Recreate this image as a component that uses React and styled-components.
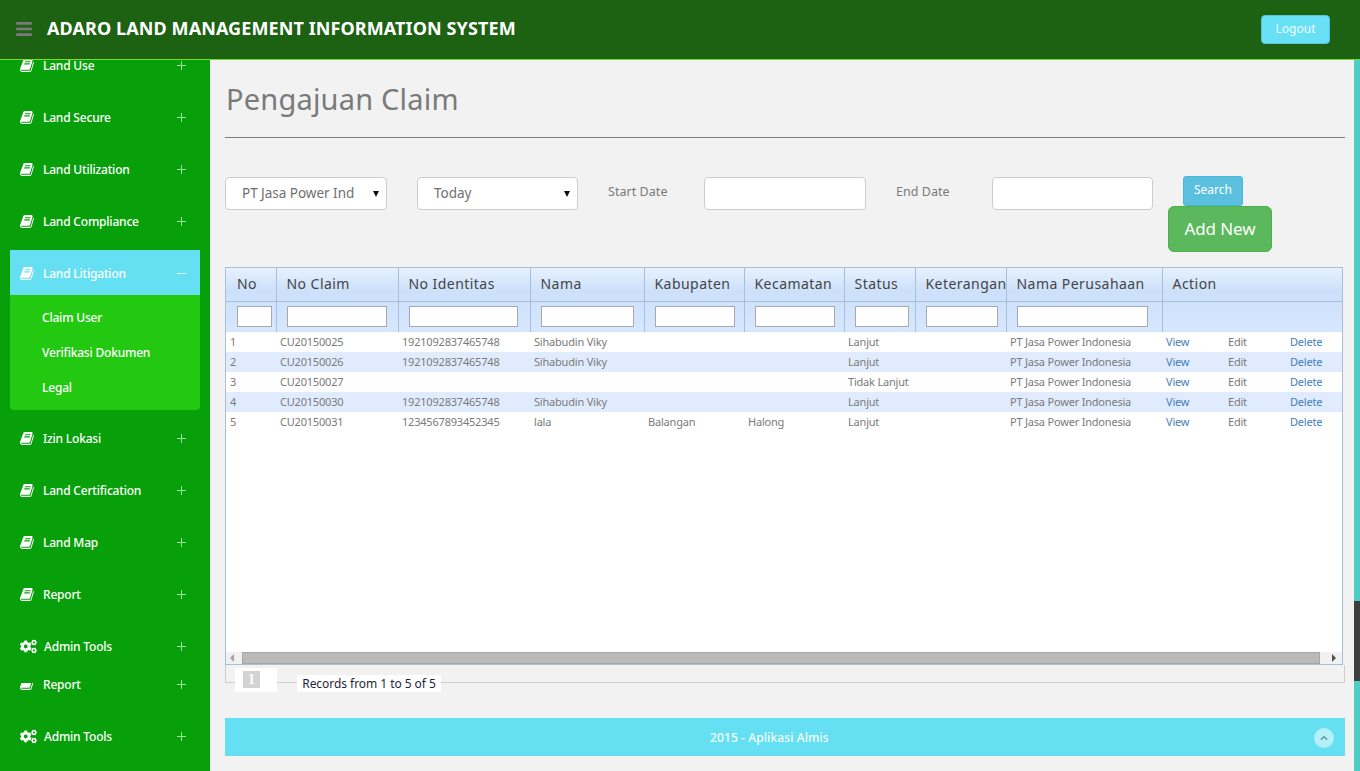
import React from "react";
import styled, { createGlobalStyle } from "styled-components";
import { FaCogs, FaBars, FaChevronUp } from "react-icons/fa";

const Global = createGlobalStyle`
  html, body { margin: 0; padding: 0; height: 100%; overflow: hidden; background: #f2f2f2; }
  body { font-family: "Noto Sans", "Open Sans", sans-serif; }
  * { box-sizing: border-box; }
`;

const Page = styled.div`
  width: 1360px; height: 771px; overflow: hidden; display: flex; flex-direction: column;
`;
const Header = styled.header`
  height: 60px; flex: none; background: #1c6212; border-bottom: 1px solid #76dc2c;
  display: flex; align-items: center; padding: 0 30px 2px 15px; position: relative; z-index: 2;
`;
const Burger = styled.span`
  color: #7b7b7b; display: flex; font-size: 18px; margin-right: 14px; margin-top: 1px;
`;
const Brand = styled.h1`
  margin: 0 0 1px; flex: 1; font-size: 18px; font-weight: 700; color: #fff; letter-spacing: 0.1px; white-space: nowrap;
`;
const Logout = styled.button`
  width: 69px; height: 29px; margin-top: 2px; background: #68e0f5; border: 1px solid #56c6d8; border-radius: 4px;
  color: #eefcff; font: 12px "Noto Sans", sans-serif; padding: 0 0 2px;
`;
const Body = styled.div`flex: 1; display: flex; min-height: 0;`;
const Sidebar = styled.nav`
  width: 210px; flex: none; background: #08a00a; overflow: hidden; padding: 0 10px;
`;
const Menu = styled.div`display: flex; flex-direction: column; margin-top: -18px;`;
const Row = styled.div`
  height: 45px; margin-bottom: ${p => p.$mb ?? 7}px; display: flex; align-items: center; padding: 2px 12px 0 10px;
  background: ${p => p.$active ? "#65dff2" : "transparent"}; color: #fff; font-size: 12px; font-weight: 500;
`;
const RowIcon = styled.span`
  width: ${p => p.$wide ? 24 : 23}px; flex: none; display: flex; align-items: center; font-size: 17px; color: #fff;
`;
const ClipIcon = styled.span`
  width: 23px; flex: none; height: 8px; margin-top: 5px; overflow: hidden; display: flex; align-items: flex-end; color: #fff;
`;
const RowLabel = styled.span`flex: 1; white-space: nowrap; letter-spacing: -0.2px;`;
const BookSvg = styled.svg`width: 15px; height: 15px; fill: currentColor; flex: none;`;
const Sign = styled.svg`
  width: 9px; height: 9px; stroke: ${p => p.$light ? "#e8fbfe" : "#9be39c"}; stroke-width: 1; flex: none; margin-right: 2px;
`;
const Sub = styled.div`
  height: 115px; margin-bottom: 5px; background: #22c910; border-radius: 0 0 4px 4px; padding-top: 5px;
`;
const SubItem = styled.div`
  height: 35px; display: flex; align-items: center; padding-left: 32px; color: #fff; font-size: 12px; font-weight: 500; letter-spacing: -0.2px;
`;
const Main = styled.main`flex: 1; min-width: 0; padding: 19px 9px 0 15px; background: #f2f2f2;`;
const Title = styled.h2`
  margin: 0 0 0 1px; font-size: 29px; line-height: 40px; font-weight: 400; color: #7a7a7a; letter-spacing: 0.2px;
`;
const Rule = styled.hr`margin: 18px 0 39px; border: 0; border-top: 1px solid #7d7d7d;`;
const Filters = styled.div`display: flex; align-items: flex-start; height: 90px;`;
const Select = styled.select`
  appearance: none; width: ${p => p.$w}px; height: 33px; flex: none; margin-right: 30px; padding: 0 0 2px 16px;
  background: #fff url("data:image/svg+xml,%3Csvg xmlns='http://www.w3.org/2000/svg' width='6' height='6'%3E%3Cpath d='M0 0h6L3 6z' fill='%23111'/%3E%3C/svg%3E") no-repeat right 7px center;
  border: 1px solid #ccc; border-radius: 4px; color: #6f6f6f; font: 13.5px "Noto Sans", sans-serif; letter-spacing: -0.02px;
`;
const FieldLabel = styled.label`
  width: ${p => p.$w}px; flex: none; height: 29px; line-height: 29px; color: #7a7a7a; font-size: 12.5px; letter-spacing: 0.05px;
`;
const DateInput = styled.input`
  width: ${p => p.$w}px; height: 33px; flex: none; margin-right: ${p => p.$mr}px; background: #fff; border: 1px solid #ccc; border-radius: 4px;
`;
const Buttons = styled.div`
  display: flex; flex-direction: column; align-items: flex-start; width: 104px; margin-top: -1px;
`;
const Search = styled.button`
  margin-left: 15px; width: 60px; height: 30px; background: #5bc0de; border: 1px solid #46b8da; border-radius: 3px;
  color: #fff; font: 12px "Noto Sans", sans-serif; padding: 0 0 3px;
`;
const AddNew = styled.button`
  width: 104px; height: 46px; background: #5cb85c; border: 1px solid #4cae4c; border-radius: 6px;
  color: #fff; font: 17px "Noto Sans", sans-serif; padding: 0 0 2px; letter-spacing: -0.1px;
`;
const Grid = styled.div`
  height: 398px; border: 1px solid #a6c0d9; background: #fff; display: flex; flex-direction: column; width: 1118px;
`;
const GridTable = styled.table`
  flex: none; table-layout: fixed; border-collapse: collapse; width: 1116px;
`;
const Col = styled.col`width: ${p => p.$w}px;`;
const HeadCell = styled.th`
  height: 33px; padding: 0 0 2px 10px; border-right: 1px solid #a6c0d9; border-bottom: 1px solid #a6c0d9;
  background: linear-gradient(#e6f1fe, #cce0fb 70%, #cfe2fc); color: #444; font-size: 14px; font-weight: 400; text-align: left;
  white-space: nowrap; overflow: hidden; letter-spacing: 0.45px;
  &:first-child { padding-left: 11px; }
  &:last-child { border-right: 0; }
`;
const FilterCell = styled.th`
  height: 31px; padding: 0 0 0 10px; border-right: 1px solid #a6c0d9; background: linear-gradient(#cfe2fc, #d6e7fe);
  &:first-child { padding-left: 11px; }
  &:last-child { border-right: 0; }
`;
const FilterInput = styled.input`
  display: block; width: ${p => p.$w}px; height: 21px; padding: 0; background: #fff; border: 1px solid #a9a9a9;
`;
const DataRow = styled.tr`background: ${p => p.$alt ? "#e0ecfd" : "#fff"};`;
const Cell = styled.td`
  height: 20px; padding: 0 0 2px 4px; font-size: 11px; color: ${p => p.$link ? "#4680ba" : "#7a7a7a"}; white-space: nowrap; overflow: hidden; letter-spacing: -0.2px;
`;
const GridSpace = styled.div`flex: 1;`;
const HScroll = styled.div`
  height: 12px; flex: none; background: #f1f1f1; display: flex; align-items: center; padding: 0 6px 0 4px;
`;
const ScrollThumb = styled.div`flex: 1; height: 12px; background: #bababa; border: 1px solid #a6a6a6; margin: 0 12px 0 8px;`;
const Arrow = styled.span`
  width: 0; height: 0; border-top: 4px solid transparent; border-bottom: 4px solid transparent;
  ${p => p.$right ? "border-left: 4px solid #505050;" : "border-right: 4px solid #a3a3a3;"}
`;
const Pager = styled.div`
  height: 18px; border: 1px solid #d2cdc5; border-top: 0; display: flex; align-items: flex-start; padding-left: 9px;
`;
const PageBox = styled.div`
  width: 42px; height: 24px; background: #fff; padding: 3px 0 0 8px; margin-top: 3px; flex: none;
`;
const PageNum = styled.span`
  display: block; width: 17px; height: 17px; background: #d3d3d3; color: #fff; font: 700 14px/17px "Liberation Serif", serif; text-align: center;
`;
const Records = styled.div`
  margin: 10px 0 0 20px; height: 17px; width: 144px; background: #fff; color: #1f1f3a; font-size: 12px; line-height: 17px; text-align: center; white-space: nowrap; letter-spacing: -0.05px;
`;
const Footer = styled.footer`
  margin-top: 35px; height: 38px; background: #65dff2; display: flex; align-items: center; padding: 0 11px 0 485px; color: #f4ffff; font-size: 12px; font-weight: 500; letter-spacing: 0.1px;
`;
const FooterText = styled.span`flex: 1;`;
const UpButton = styled.span`
  width: 20px; height: 20px; margin-top: 2px; border-radius: 50%; background: #b3f0f9; display: flex; align-items: center; justify-content: center; color: #5d8a8f; font-size: 8px;
`;
const Rail = styled.div`width: 6px; flex: none; display: flex; flex-direction: column;`;
const RailPart = styled.div`
  flex: ${p => p.$h ? `none` : 1}; height: ${p => p.$h ? `${p.$h}px` : "auto"}; background: ${p => p.$dark ? "#3e3e3e" : "#4ecdc4"};
`;

const PlusSign = () => <Sign viewBox="0 0 9 9"><path d="M0 4.5h9M4.5 0v9" /></Sign>;
const MinusSign = () => <Sign $light viewBox="0 0 9 9"><path d="M0 4.5h9" /></Sign>;
const Book = () => (
  <BookSvg viewBox="0 0 1792 1792">
    <path d="M1639 478q40 57 18 129l-275 906q-19 64-76.500 107.500t-122.500 43.500h-923q-77 0-148.500-53.500t-99.500-131.500q-24-67-2-127 0-4 3-27t4-37q1-8-3-21.500t-3-19.500q2-11 8-21t16.500-23.500 16.500-23.500q23-38 45-91.500t30-91.500q3-10 .5-30t-.5-28q3-11 17-28t17-23q21-36 42-92t25-90q1-9-2.500-32t.5-28q4-13 22-30.500t22-22.500q19-26 42.500-84.500t27.500-96.500q1-8-3-25.500t-2-26.500q2-8 9-18t18-23 17-21q8-12 16.500-30.500t15-35 16-36 19.500-32 26.500-23.500 36-11.500 47.500 5.500l-1 3q38-9 51-9h761q74 0 114 56t18 130l-274 906q-36 119-71.500 153.500t-128.500 34.500h-869q-27 0-38 15-11 16-1 43 24 70 144 70h923q29 0 56-15.500t35-41.500l300-987q7-22 5-57 38 15 59 43zm-1064 2q-4 13 2 22.500t20 9.500h608q13 0 25.500-9.500t16.500-22.500l21-64q4-13-2-22.500t-20-9.500h-608q-13 0-25.500 9.500t-16.500 22.500zm-83 256q-4 13 2 22.500t20 9.500h608q13 0 25.500-9.500t16.500-22.500l21-64q4-13-2-22.500t-20-9.500h-608q-13 0-25.500 9.500t-16.500 22.500z" />
  </BookSvg>
);

const Item = ({ label, icon = "book", active, mb }) => (
  <Row $active={active} $mb={mb}>
    {icon === "book" && <RowIcon><Book /></RowIcon>}
    {icon === "cogs" && <RowIcon $wide><FaCogs /></RowIcon>}
    {icon === "clip" && <ClipIcon><Book /></ClipIcon>}
    <RowLabel>{label}</RowLabel>
    {active ? <MinusSign /> : <PlusSign />}
  </Row>
);

const heads = ["No", "No Claim", "No Identitas", "Nama", "Kabupaten", "Kecamatan", "Status", "Keterangan", "Nama Perusahaan"];
const filterW = [35, 100, 109, 93, 80, 80, 54, 72, 131];
const rows = [
  ["1", "CU20150025", "1921092837465748", "Sihabudin Viky", "", "", "Lanjut"],
  ["2", "CU20150026", "1921092837465748", "Sihabudin Viky", "", "", "Lanjut"],
  ["3", "CU20150027", "", "", "", "", "Tidak Lanjut"],
  ["4", "CU20150030", "1921092837465748", "Sihabudin Viky", "", "", "Lanjut"],
  ["5", "CU20150031", "1234567893452345", "lala", "Balangan", "Halong", "Lanjut"],
];

export default function App() {
  return (
    <Page>
      <Global />
      <Header>
        <Burger><FaBars /></Burger>
        <Brand>ADARO LAND MANAGEMENT INFORMATION SYSTEM</Brand>
        <Logout>Logout</Logout>
      </Header>
      <Body>
        <Sidebar>
          <Menu>
            <Item label="Land Use" />
            <Item label="Land Secure" />
            <Item label="Land Utilization" />
            <Item label="Land Compliance" />
            <Item label="Land Litigation" active mb={0} />
            <Sub>
              <SubItem>Claim User</SubItem>
              <SubItem>Verifikasi Dokumen</SubItem>
              <SubItem>Legal</SubItem>
            </Sub>
            <Item label="Izin Lokasi" />
            <Item label="Land Certification" />
            <Item label="Land Map" />
            <Item label="Report" />
            <Item label="Admin Tools" icon="cogs" mb={-7} />
            <Item label="Report" icon="clip" />
            <Item label="Admin Tools" icon="cogs" />
          </Menu>
        </Sidebar>
        <Main>
          <Title>Pengajuan Claim</Title>
          <Rule />
          <Filters>
            <Select $w={162} defaultValue="pt"><option value="pt">PT Jasa Power Ind</option></Select>
            <Select $w={161} defaultValue="today"><option value="today">Today</option></Select>
            <FieldLabel $w={96}>Start Date</FieldLabel>
            <DateInput $w={162} $mr={30} />
            <FieldLabel $w={96}>End Date</FieldLabel>
            <DateInput $w={161} $mr={15} />
            <Buttons>
              <Search>Search</Search>
              <AddNew>Add New</AddNew>
            </Buttons>
          </Filters>
          <Grid>
            <GridTable>
              <colgroup>
                <Col $w={50} /><Col $w={122} /><Col $w={132} /><Col $w={114} /><Col $w={100} /><Col $w={100} /><Col $w={71} /><Col $w={91} /><Col $w={156} /><Col $w={62} /><Col $w={62} /><Col />
              </colgroup>
              <thead>
                <tr>
                  {heads.map(h => <HeadCell key={h}>{h}</HeadCell>)}
                  <HeadCell colSpan={3}>Action</HeadCell>
                </tr>
                <tr>
                  {filterW.map((w, i) => <FilterCell key={i}><FilterInput $w={w} /></FilterCell>)}
                  <FilterCell colSpan={3} />
                </tr>
              </thead>
              <tbody>
                {rows.map((r, i) => (
                  <DataRow key={r[0]} $alt={i % 2 === 1}>
                    {r.map((c, j) => <Cell key={j}>{c}</Cell>)}
                    <Cell />
                    <Cell>PT Jasa Power Indonesia</Cell>
                    <Cell $link>View</Cell>
                    <Cell>Edit</Cell>
                    <Cell $link>Delete</Cell>
                  </DataRow>
                ))}
              </tbody>
            </GridTable>
            <GridSpace />
            <HScroll>
              <Arrow />
              <ScrollThumb />
              <Arrow $right />
            </HScroll>
          </Grid>
          <Pager>
            <PageBox><PageNum>1</PageNum></PageBox>
            <Records>Records from 1 to 5 of 5</Records>
          </Pager>
          <Footer>
            <FooterText>2015 - Aplikasi Almis</FooterText>
            <UpButton><FaChevronUp /></UpButton>
          </Footer>
        </Main>
        <Rail>
          <RailPart />
          <RailPart $dark $h={80} />
          <RailPart $h={90} />
        </Rail>
      </Body>
    </Page>
  );
}
